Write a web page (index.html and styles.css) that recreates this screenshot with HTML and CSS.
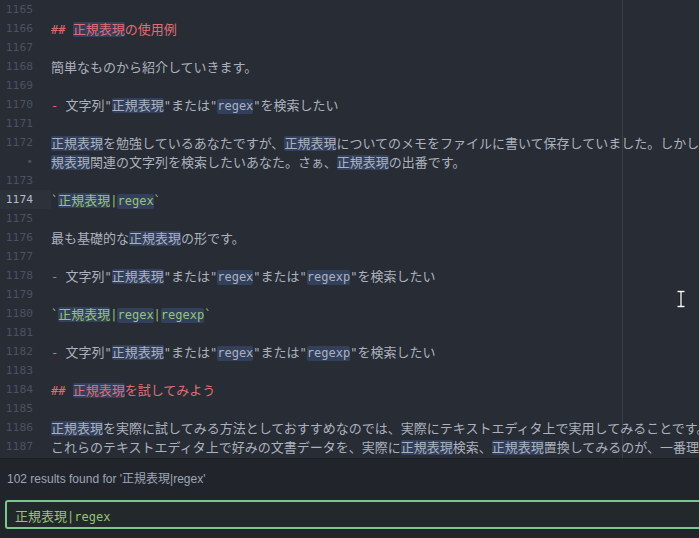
FILE: index.html
```html
<!DOCTYPE html>
<html lang="ja">
<head>
<meta charset="utf-8">
<title>editor</title>
<link rel="stylesheet" href="styles.css">
</head>
<body>
<div class="editor">
  <div class="row"><span class="ln">1165</span><span class="tx"></span></div>
  <div class="row"><span class="ln">1166</span><span class="tx h"><span class="m">## </span><span class="hl">正規表現</span>の使用例</span></div>
  <div class="row"><span class="ln">1167</span><span class="tx"></span></div>
  <div class="row"><span class="ln">1168</span><span class="tx">簡単なものから紹介していきます。</span></div>
  <div class="row"><span class="ln">1169</span><span class="tx"></span></div>
  <div class="row"><span class="ln">1170</span><span class="tx"><span class="m red">- </span>文字列<span class="m">"</span><span class="hl">正規表現</span><span class="m">"</span>または<span class="m">"</span><span class="hl m">regex</span><span class="m">"</span>を検索したい</span></div>
  <div class="row"><span class="ln">1171</span><span class="tx"></span></div>
  <div class="row"><span class="ln">1172</span><span class="tx"><span class="hl">正規表現</span>を勉強しているあなたですが、<span class="hl">正規表現</span>についてのメモをファイルに書いて保存していました。しかし、<span class="hl">正</span></span></div>
  <div class="row"><span class="ln">•</span><span class="tx"><span class="hl">規表現</span>関連の文字列を検索したいあなた。さぁ、<span class="hl">正規表現</span>の出番です。</span></div>
  <div class="row"><span class="ln">1173</span><span class="tx"></span></div>
  <div class="row cur"><span class="ln">1174</span><span class="tx code"><span class="m">`</span><span class="hl">正規表現</span><span class="m">|</span><span class="hl m">regex</span><span class="m">`</span></span></div>
  <div class="row"><span class="ln">1175</span><span class="tx"></span></div>
  <div class="row"><span class="ln">1176</span><span class="tx">最も基礎的な<span class="hl">正規表現</span>の形です。</span></div>
  <div class="row"><span class="ln">1177</span><span class="tx"></span></div>
  <div class="row"><span class="ln">1178</span><span class="tx"><span class="m red">- </span>文字列<span class="m">"</span><span class="hl">正規表現</span><span class="m">"</span>または<span class="m">"</span><span class="hl m">regex</span><span class="m">"</span>または<span class="m">"</span><span class="hl m">regexp</span><span class="m">"</span>を検索したい</span></div>
  <div class="row"><span class="ln">1179</span><span class="tx"></span></div>
  <div class="row"><span class="ln">1180</span><span class="tx code"><span class="m">`</span><span class="hl">正規表現</span><span class="m">|</span><span class="hl m">regex</span><span class="m">|</span><span class="hl m">regexp</span><span class="m">`</span></span></div>
  <div class="row"><span class="ln">1181</span><span class="tx"></span></div>
  <div class="row"><span class="ln">1182</span><span class="tx"><span class="m red">- </span>文字列<span class="m">"</span><span class="hl">正規表現</span><span class="m">"</span>または<span class="m">"</span><span class="hl m">regex</span><span class="m">"</span>または<span class="m">"</span><span class="hl m">regexp</span><span class="m">"</span>を検索したい</span></div>
  <div class="row"><span class="ln">1183</span><span class="tx"></span></div>
  <div class="row"><span class="ln">1184</span><span class="tx h"><span class="m">## </span><span class="hl">正規表現</span>を試してみよう</span></div>
  <div class="row"><span class="ln">1185</span><span class="tx"></span></div>
  <div class="row"><span class="ln">1186</span><span class="tx"><span class="hl">正規表現</span>を実際に試してみる方法としておすすめなのでは、実際にテキストエディタ上で実用してみることです。</span></div>
  <div class="row"><span class="ln">1187</span><span class="tx">これらのテキストエディタ上で好みの文書データを、実際に<span class="hl">正規表現</span>検索、<span class="hl">正規表現</span>置換してみるのが、一番理解が早いです。</span></div>
  <svg class="ibeam" width="10" height="18" viewBox="0 0 10 18" aria-hidden="true">
    <path d="M1.5 1.5H8.5M5 1.5V16.5M1.5 16.5H8.5" stroke="#1a1d22" stroke-width="3" fill="none"/>
    <path d="M1.5 1.5H8.5M5 1.5V16.5M1.5 16.5H8.5" stroke="#ffffff" stroke-width="1.3" fill="none"/>
  </svg>
</div>
<div class="panel">
  <div class="status">102 results found for '正規表現|regex'</div>
  <div class="find"><span class="fj">正規表現</span><span class="m">|regex</span></div>
</div>
</body>
</html>
```

FILE: styles.css
```css
html, body {
  margin: 0;
  padding: 0;
}

body {
  width: 699px;
  height: 538px;
  overflow: hidden;
  background: #21252b;
  font-family: "Noto Sans CJK JP", sans-serif;
}

.editor {
  position: relative;
  height: 458px;
  overflow: hidden;
  background:
    linear-gradient(to right, transparent 622px, #3b3f48 622px, #3b3f48 623px, transparent 623px),
    #282c34;
}

.row {
  display: flex;
  height: 19px;
  line-height: 19px;
  white-space: pre;
}

.ln {
  flex: 0 0 51px;
  box-sizing: border-box;
  padding-right: 18px;
  text-align: right;
  font-family: "DejaVu Sans Mono", monospace;
  font-size: 11.3px;
  color: #4b5263;
}

.cur .ln {
  background: #2c313a;
  color: #b4bac6;
}

.tx {
  flex: none;
  font-family: "Noto Sans CJK JP", sans-serif;
  font-size: 13px;
  color: #abb2bf;
}

.m {
  font-family: "DejaVu Sans Mono", "Noto Sans CJK JP", monospace;
  font-size: 12px;
  line-height: 1;
}

.h,
.red {
  color: #e06c75;
}

.code {
  color: #98c379;
}

.hl {
  display: inline-block;
  line-height: 14px;
  padding-bottom: 1px;
  background: #33405c;
  border-radius: 2px;
}

.hl.m {
  line-height: 14px;
  padding-top: 0;
  padding-bottom: 1px;
}

.ibeam {
  position: absolute;
  left: 676px;
  top: 290px;
}

.panel {
  border-top: 1px solid #1b1e23;
  padding-top: 13px;
}

.status {
  padding-left: 7px;
  font-family: "Liberation Sans", "Noto Sans CJK JP", sans-serif;
  font-size: 12px;
  line-height: 14px;
  color: #9da5b4;
}

.find {
  margin: 14px -12px 0 5px;
  height: 29px;
  box-sizing: border-box;
  border: 2px solid #78c98c;
  border-radius: 3px;
  background: #23282b;
  padding-left: 8px;
  line-height: 25px;
  white-space: pre;
  color: #98c379;
}

.fj {
  font-family: "Noto Sans CJK JP", sans-serif;
  font-size: 13px;
}
```
